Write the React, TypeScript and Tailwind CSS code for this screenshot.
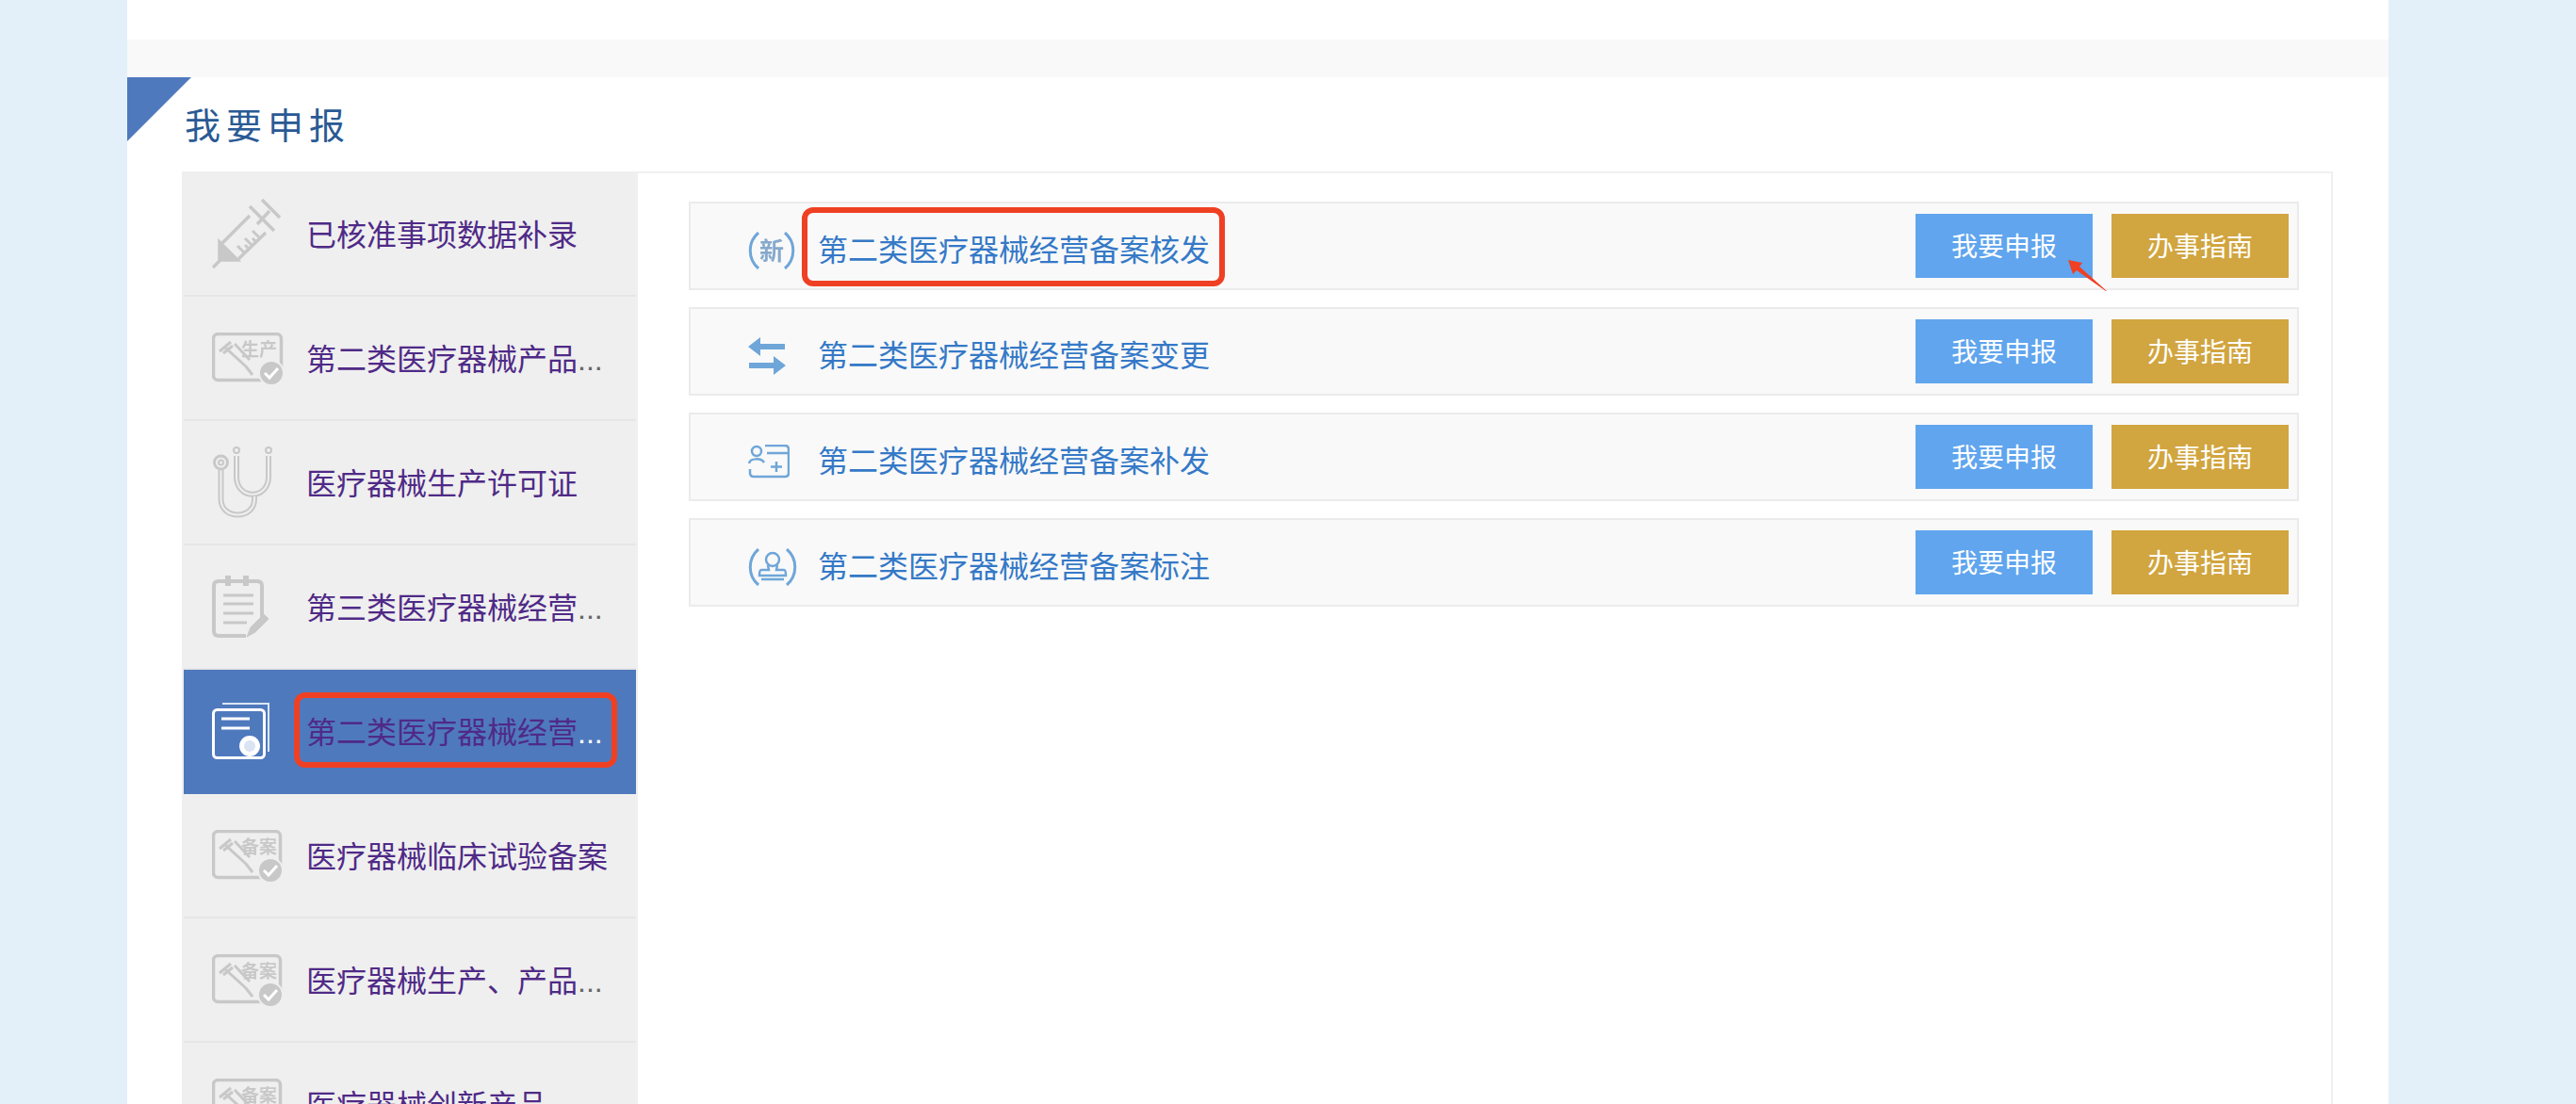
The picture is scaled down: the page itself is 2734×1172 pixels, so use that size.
const FONT = "font-['Liberation_Sans','Noto_Sans_CJK_SC',sans-serif]";
const G = "#c8c8c8";
const B = "#6fa6d9";

function Syringe() {
  return (
    <svg width="74" height="74" viewBox="0 0 74 74" fill="none" stroke={G} strokeWidth="3.5" className="blur-[0.4px]">
      <path d="M1 73 10 64" />
      <path d="M8 46V65H27Z" fill={G} />
      <path d="M11 47 40 18M28 64 57 36M40 8 66 34M53 1 72 20M48 27 61 13" />
      <path d="M35 58 27 50M39 53 35 49M43 50 35 42M47 46 43 42M51 42 43 34" strokeWidth="3" />
    </svg>
  );
}

function Badge({ w, h, label }: { w: number; h: number; label: string }) {
  return (
    <svg width={w} height={h} viewBox={`0 0 ${w} ${h}`} fill="none" className="blur-[0.4px]">
      <rect x="1.5" y="1.5" width={w - 4} height={h - 6} rx="5" stroke={G} strokeWidth="3.5" />
      <g stroke={G} strokeWidth="3">
        <path d="M8 20 20 10M12 22 22 14M13 15 36 36M24 12 40 29M36 36 43 45" />
      </g>
      <text x="31" y="25" fontSize="19" fontWeight="700" fill={G} className={FONT}>
        {label}
      </text>
      <circle cx={w - 13} cy={h - 12} r="14" fill="#efefef" />
      <circle cx={w - 13} cy={h - 12} r="12" fill={G} />
      <path d={`M${w - 20} ${h - 12} ${w - 15} ${h - 7} ${w - 6} ${h - 17}`} stroke="#fff" strokeWidth="3" />
    </svg>
  );
}

function Stethoscope() {
  const tubes = "M9.5 25V56C9.5 78 45 78 45 56V53M26 10V32C26 57 60 57 60 32V10";
  return (
    <svg width="66" height="76" viewBox="0 0 66 76" fill="none" className="blur-[0.4px]">
      <path d={tubes} stroke={G} strokeWidth="6" />
      <path d={tubes} stroke="#efefef" strokeWidth="2" />
      <circle cx="9.5" cy="17" r="7" stroke={G} strokeWidth="3" />
      <circle cx="9.5" cy="17" r="2.5" stroke={G} strokeWidth="2" />
      <circle cx="26" cy="4" r="3" stroke={G} strokeWidth="2" />
      <circle cx="60" cy="4" r="3" stroke={G} strokeWidth="2" />
    </svg>
  );
}

function Clipboard() {
  return (
    <svg width="62" height="66" viewBox="0 0 62 66" fill="none" stroke={G} className="blur-[0.4px]">
      <path d="M36 64H7Q2 64 2 59V11Q2 6 7 6H48Q53 6 53 11V44" strokeWidth="4" />
      <path d="M17 0V11M36 0V11" strokeWidth="6" />
      <path d="M12 21H44M12 30H44M12 40H44M12 50H37" strokeWidth="3" />
      <path d="M37 65 41 55 55 41 60 46 46 60Z" fill={G} />
    </svg>
  );
}

function Certificate() {
  return (
    <svg width="62" height="60" viewBox="0 0 62 60" fill="none" stroke="#fff">
      <rect x="1.5" y="7.5" width="54" height="51" rx="4" strokeWidth="3" />
      <path d="M11 1H60V52" strokeWidth="2" stroke="#dbe6f5" />
      <path d="M10 17H40M10 27H40" strokeWidth="3" />
      <circle cx="40" cy="46" r="11" fill="#fff" stroke="none" />
      <circle cx="40" cy="46" r="6" fill="#d9e3f2" stroke="none" />
    </svg>
  );
}

function Paren({ w, children }: { w: number; children: React.ReactNode }) {
  return (
    <svg width={w} height="40" viewBox={`0 0 ${w} 40`} fill="none" stroke={B} className="blur-[0.3px]">
      <path d={`M11 1A25 25 0 0 0 11 39M${w - 11} 1A25 25 0 0 1 ${w - 11} 39`} strokeWidth="3" />
      {children}
    </svg>
  );
}

function NewIcon() {
  return (
    <Paren w={50}>
      <text x="25" y="30" textAnchor="middle" fontSize="26" fontWeight="700" fill="#86a9cc" stroke="none" className={FONT}>
        新
      </text>
    </Paren>
  );
}

function Swap() {
  return (
    <svg width="40" height="40" viewBox="0 0 40 40" fill={B} className="blur-[0.3px]">
      <path d="M0 10 13 0V7H39V13H13V20Z" />
      <path d="M40 30 27 20V27H1V33H27V40Z" />
    </svg>
  );
}

function CardPlus() {
  return (
    <svg width="44" height="36" viewBox="0 0 44 36" fill="none" stroke={B} strokeWidth="2.5" className="blur-[0.3px]">
      <circle cx="9" cy="7" r="5" />
      <path d="M1 20C2 14 14 14 17 19M2 26V30Q2 34 6 34H39Q43 34 43 30V5Q43 1 39 1H18M20 9H43M30 18V29M24 23.5H36" />
    </svg>
  );
}

function Stamp() {
  return (
    <Paren w={52}>
      <circle cx="26" cy="12" r="7" strokeWidth="2.5" />
      <path d="M21 18 22 23H14Q12 23 12 29H40Q40 23 38 23H30L31 18M14 33H38" strokeWidth="2.5" />
    </Paren>
  );
}

const menu = [
  { text: "已核准事项数据补录", icon: <Syringe /> },
  { text: "第二类医疗器械产品", more: true, icon: <Badge w={76} h={55} label="生产" /> },
  { text: "医疗器械生产许可证", icon: <Stethoscope /> },
  { text: "第三类医疗器械经营", more: true, icon: <Clipboard /> },
  { text: "第二类医疗器械经营", more: true, icon: <Certificate />, active: true },
  { text: "医疗器械临床试验备案", icon: <Badge w={75} h={55} label="备案" /> },
  { text: "医疗器械生产、产品", more: true, icon: <Badge w={75} h={55} label="备案" /> },
  { text: "医疗器械创新产品", icon: <Badge w={75} h={55} label="备案" /> },
];

const rows = [
  { text: "第二类医疗器械经营备案核发", icon: <NewIcon /> },
  { text: "第二类医疗器械经营备案变更", icon: <Swap /> },
  { text: "第二类医疗器械经营备案补发", icon: <CardPlus /> },
  { text: "第二类医疗器械经营备案标注", icon: <Stamp /> },
];

export default function App() {
  return (
    <div className={`h-[1172px] overflow-hidden bg-[#e3f0fa] pl-[135px] ${FONT}`}>
      <div className="h-full w-[2400px] bg-white">
        <div className="h-[42px]" />
        <div className="h-[40px] bg-[#f9f9f9]" />
        <div className="relative flex h-[100px] items-center pl-[61px] pt-[5px]">
          <div className="absolute left-0 top-0 h-[68px] w-[68px] bg-[#4f79bd] [clip-path:polygon(0_0,100%_0,0_100%)]" />
          <h2 className="text-[38px] tracking-[6px] text-[#2a5a94]">我要申报</h2>
        </div>

        <div className="ml-[58px] mr-[59px] flex items-stretch">
          <ul className="w-[482px] shrink-0 border-l-2 border-[#efefef] bg-[#efefef] pt-px">
            {menu.map((m) => (
              <li
                key={m.text}
                className={`relative flex h-[132px] items-center border-b-2 pl-[30px] ${
                  m.active ? "border-[#4f79bd] bg-[#4f79bd] text-white" : "border-[#e6e6e6] text-[#666]"
                }`}
              >
                <div className="flex w-[100px] shrink-0 items-center">{m.icon}</div>
                <div className="whitespace-nowrap pt-[3px] text-[32px] leading-[48px]">
                  <span className="text-[#4f2a87]">{m.text}</span>
                  {m.more && "..."}
                </div>
                {m.active && (
                  <div className="absolute left-[117px] top-[24px] h-[80px] w-[343px] rounded-[12px] border-[6px] border-[#ef4023]" />
                )}
              </li>
            ))}
          </ul>

          <div className="flex-1 border-2 border-[#f0f0f0] pl-[54px] pr-[34px] pt-[30px]">
            <div className="flex flex-col gap-[18px]">
              {rows.map((r, i) => (
                <div
                  key={r.text}
                  className="relative flex h-[94px] items-center border-2 border-[#ebebeb] bg-[#f9f9f9] pl-[61px] pr-[9px]"
                >
                  <div className="flex w-[74px] shrink-0 items-center pt-[9px]">{r.icon}</div>
                  <a className="flex-1 pt-[10px] text-[32px] leading-[48px] text-[#3579c7]">{r.text}</a>
                  <button className="h-[68px] w-[188px] bg-[#60a5ee] pt-[4px] text-[28px] text-white">我要申报</button>
                  <button className="ml-[20px] h-[68px] w-[188px] bg-[#d1a53f] pt-[4px] text-[28px] text-white">办事指南</button>
                  {i === 0 && (
                    <>
                      <div className="absolute left-[118px] top-[4px] h-[84px] w-[449px] rounded-[12px] border-[6px] border-[#ef4023]" />
                      <svg className="absolute left-[1462px] top-[60px]" width="42" height="34" viewBox="0 0 42 34">
                        <path d="M0 0 15 3 12 7 41 33 40 33 9 11 5 15Z" fill="#ef4023" />
                      </svg>
                    </>
                  )}
                </div>
              ))}
            </div>
          </div>
        </div>
      </div>
    </div>
  );
}
